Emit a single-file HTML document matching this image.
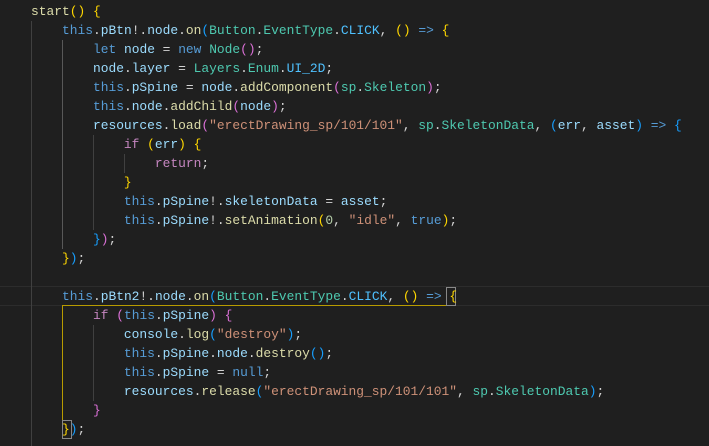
<!DOCTYPE html><html><head><style>
body{margin:0;background:#1f1f1f;width:709px;height:446px;overflow:hidden;position:relative;font-family:"Liberation Mono",monospace;font-size:12.92px;color:#d4d4d4}
.l{position:absolute;left:0;height:19px;line-height:19px;white-space:pre}
.t{color:#569cd6}.v{color:#9cdcfe}.f{color:#dcdcaa}.c{color:#4ec9b0}.s{color:#ce9178}.n{color:#b5cea8}.k{color:#c586c0}.C{color:#4fc1ff}
.g{color:#ffd700}.p{color:#da70d6}.b{color:#179fff}
.gd{position:absolute;width:1px;background:#404040}
</style></head><body>
<div style="position:absolute;left:0;top:286px;width:709px;height:18px;border-top:1px solid #2c2c2c;border-bottom:1px solid #2c2c2c"></div>
<div class="gd" style="left:31px;top:21px;height:425px"></div>
<div class="gd" style="left:62px;top:40px;height:209px;background:#585858"></div>
<div class="gd" style="left:93px;top:135px;height:95px"></div>
<div class="gd" style="left:124px;top:154px;height:19px"></div>
<div class="gd" style="left:93px;top:325px;height:76px"></div>
<div style="position:absolute;left:62px;top:305px;width:393px;height:0;border-top:1px solid #b89b00"></div>
<div style="position:absolute;left:62px;top:305px;width:0;height:116px;border-left:1px solid #b89b00"></div>
<div style="position:absolute;left:446px;top:287px;width:8px;height:17px;border:1px solid #888"></div>
<div style="position:absolute;left:62px;top:420px;width:8px;height:17px;border:1px solid #888"></div>
<div class="l" style="top:2px">    <span class="f">start</span><span class="g">()</span> <span class="g">{</span></div>
<div class="l" style="top:21px">        <span class="t">this</span>.<span class="v">pBtn</span>!.<span class="v">node</span>.<span class="f">on</span><span class="b">(</span><span class="c">Button</span>.<span class="c">EventType</span>.<span class="C">CLICK</span>, <span class="g">()</span> <span class="t">=&gt;</span> <span class="g">{</span></div>
<div class="l" style="top:40px">            <span class="t">let</span> <span class="v">node</span> = <span class="t">new</span> <span class="c">Node</span><span class="p">()</span>;</div>
<div class="l" style="top:59px">            <span class="v">node</span>.<span class="v">layer</span> = <span class="c">Layers</span>.<span class="c">Enum</span>.<span class="C">UI_2D</span>;</div>
<div class="l" style="top:78px">            <span class="t">this</span>.<span class="v">pSpine</span> = <span class="v">node</span>.<span class="f">addComponent</span><span class="p">(</span><span class="c">sp</span>.<span class="c">Skeleton</span><span class="p">)</span>;</div>
<div class="l" style="top:97px">            <span class="t">this</span>.<span class="v">node</span>.<span class="f">addChild</span><span class="p">(</span><span class="v">node</span><span class="p">)</span>;</div>
<div class="l" style="top:116px">            <span class="v">resources</span>.<span class="f">load</span><span class="p">(</span><span class="s">"erectDrawing_sp/101/101"</span>, <span class="c">sp</span>.<span class="c">SkeletonData</span>, <span class="b">(</span><span class="v">err</span>, <span class="v">asset</span><span class="b">)</span> <span class="t">=&gt;</span> <span class="b">{</span></div>
<div class="l" style="top:135px">                <span class="k">if</span> <span class="g">(</span><span class="v">err</span><span class="g">)</span> <span class="g">{</span></div>
<div class="l" style="top:154px">                    <span class="k">return</span>;</div>
<div class="l" style="top:173px">                <span class="g">}</span></div>
<div class="l" style="top:192px">                <span class="t">this</span>.<span class="v">pSpine</span>!.<span class="v">skeletonData</span> = <span class="v">asset</span>;</div>
<div class="l" style="top:211px">                <span class="t">this</span>.<span class="v">pSpine</span>!.<span class="f">setAnimation</span><span class="g">(</span><span class="n">0</span>, <span class="s">"idle"</span>, <span class="t">true</span><span class="g">)</span>;</div>
<div class="l" style="top:230px">            <span class="b">}</span><span class="p">)</span>;</div>
<div class="l" style="top:249px">        <span class="g">}</span><span class="b">)</span>;</div>
<div class="l" style="top:287px">        <span class="t">this</span>.<span class="v">pBtn2</span>!.<span class="v">node</span>.<span class="f">on</span><span class="b">(</span><span class="c">Button</span>.<span class="c">EventType</span>.<span class="C">CLICK</span>, <span class="g">()</span> <span class="t">=&gt;</span> <span class="g">{</span></div>
<div class="l" style="top:306px">            <span class="k">if</span> <span class="p">(</span><span class="t">this</span>.<span class="v">pSpine</span><span class="p">)</span> <span class="p">{</span></div>
<div class="l" style="top:325px">                <span class="v">console</span>.<span class="f">log</span><span class="b">(</span><span class="s">"destroy"</span><span class="b">)</span>;</div>
<div class="l" style="top:344px">                <span class="t">this</span>.<span class="v">pSpine</span>.<span class="v">node</span>.<span class="f">destroy</span><span class="b">()</span>;</div>
<div class="l" style="top:363px">                <span class="t">this</span>.<span class="v">pSpine</span> = <span class="t">null</span>;</div>
<div class="l" style="top:382px">                <span class="v">resources</span>.<span class="f">release</span><span class="b">(</span><span class="s">"erectDrawing_sp/101/101"</span>, <span class="c">sp</span>.<span class="c">SkeletonData</span><span class="b">)</span>;</div>
<div class="l" style="top:401px">            <span class="p">}</span></div>
<div class="l" style="top:420px">        <span class="g">}</span><span class="b">)</span>;</div>
</body></html>
